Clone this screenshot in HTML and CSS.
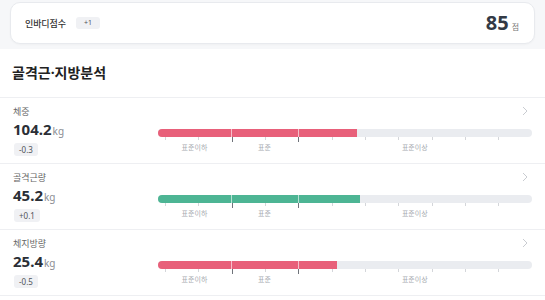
FILE: index.html
```html
<!DOCTYPE html>
<html lang="ko">
<head>
<meta charset="utf-8">
<link rel="stylesheet" href="styles.css">
</head>
<body>
<div class="top">
  <div class="score-card">
    <div class="score-left">
      <span class="score-label">인바디점수</span>
      <span class="chip chip-sm">+1</span>
    </div>
    <div class="score-right">
      <span class="score-num">85</span>
      <span class="score-unit">점</span>
    </div>
  </div>
</div>

<section class="analysis">
  <h2 class="title">골격근·지방분석</h2>

  <div class="row">
    <div class="info">
      <div class="label">체중</div>
      <div class="value">104.2<span class="unit">kg</span></div>
      <span class="chip">-0.3</span>
    </div>
    <div class="gauge">
      <div class="chev-row"><svg class="chev" width="6" height="10" viewBox="0 0 6 10"><path d="M1 1 L5 5 L1 9" fill="none" stroke="#c9ccd1" stroke-width="1"/></svg></div>
      <div class="track"><div class="fill red" style="width:53.3%"></div></div>
      <div class="ticks"><i></i><i></i><i class="dark"></i><i></i><i class="dark"></i><i></i><i></i><i></i><i></i><i></i><i></i></div>
      <div class="zones"><span>표준이하</span><span>표준</span><span>표준이상</span></div>
    </div>
  </div>

  <div class="row">
    <div class="info">
      <div class="label">골격근량</div>
      <div class="value">45.2<span class="unit">kg</span></div>
      <span class="chip">+0.1</span>
    </div>
    <div class="gauge">
      <div class="chev-row"><svg class="chev" width="6" height="10" viewBox="0 0 6 10"><path d="M1 1 L5 5 L1 9" fill="none" stroke="#c9ccd1" stroke-width="1"/></svg></div>
      <div class="track"><div class="fill green" style="width:54%"></div></div>
      <div class="ticks"><i></i><i></i><i class="dark"></i><i></i><i class="dark"></i><i></i><i></i><i></i><i></i><i></i><i></i></div>
      <div class="zones"><span>표준이하</span><span>표준</span><span>표준이상</span></div>
    </div>
  </div>

  <div class="row">
    <div class="info">
      <div class="label">체지방량</div>
      <div class="value">25.4<span class="unit">kg</span></div>
      <span class="chip">-0.5</span>
    </div>
    <div class="gauge">
      <div class="chev-row"><svg class="chev" width="6" height="10" viewBox="0 0 6 10"><path d="M1 1 L5 5 L1 9" fill="none" stroke="#c9ccd1" stroke-width="1"/></svg></div>
      <div class="track"><div class="fill red" style="width:47.8%"></div></div>
      <div class="ticks"><i></i><i></i><i class="dark"></i><i></i><i class="dark"></i><i></i><i></i><i></i><i></i><i></i><i></i></div>
      <div class="zones"><span>표준이하</span><span>표준</span><span>표준이상</span></div>
    </div>
  </div>
  <div class="end"></div>
</section>
</body>
</html>
```

FILE: styles.css
```css
* { box-sizing: border-box; }
html, body { margin: 0; padding: 0; }
body {
  width: 545px;
  height: 300px;
  overflow: hidden;
  background: #fff;
  font-family: "Noto Sans", "Noto Sans CJK KR", sans-serif;
  color: #222;
}

.top {
  background: #f6f7f9;
  padding: 2px 10px 5px;
}
.score-card {
  height: 42px;
  background: #fff;
  border: 1px solid #e8eaee;
  border-radius: 10px;
  box-shadow: 0 1px 2px rgba(0,0,0,0.03);
  display: flex;
  align-items: center;
  justify-content: space-between;
  padding: 0 15px 0 14px;
}
.score-left { display: flex; align-items: center; gap: 10px; }
.score-label { font-size: 9px; font-weight: 500; color: #333; letter-spacing: -0.1px; }
.score-right { display: flex; align-items: baseline; gap: 3px; }
.score-num { font-size: 20px; font-weight: 700; color: #333a45; line-height: 1; }
.score-unit { font-size: 8px; color: #777; }

.chip {
  display: inline-block;
  align-self: flex-start;
  background: #f0f1f4;
  color: #50545a;
  font-size: 8px;
  line-height: 13px;
  height: 13px;
  padding: 0 5px;
  border-radius: 3px;
}
.chip-sm { font-size: 7px; height: 12px; line-height: 12px; padding: 0 8px; align-self: center; }

.analysis { display: flex; flex-direction: column; }
.title {
  margin: 0;
  height: 48px;
  line-height: 48px;
  padding-left: 12px;
  font-size: 14px;
  font-weight: 700;
  color: #222;
}
.row {
  height: 66px;
  border-top: 1px solid #eeeff2;
  display: grid;
  grid-template-columns: 145px 1fr;
  padding: 0 14px 0 13px;
}
.end { border-top: 1px solid #eeeff2; }

.info { display: flex; flex-direction: column; padding-top: 6px; }
.label { font-size: 9px; line-height: 16px; color: #666; }
.value { font-size: 15px; font-weight: 700; line-height: 19px; color: #2b2f36; }
.unit { font-size: 10px; font-weight: 400; color: #8a8d93; margin-left: 1px; }
.info .chip { margin-top: 2px; margin-left: 1px; }

.gauge { display: flex; flex-direction: column; }
.chev-row { display: flex; justify-content: flex-end; padding: 8px 4px 0 0; height: 31px; }
.track {
  height: 8px;
  border-radius: 4px;
  background: #eaecf0;
  overflow: hidden;
}
.fill {
  height: 100%;
  background-image: linear-gradient(90deg,
    transparent 73px, rgba(255,255,255,0.6) 73px, rgba(255,255,255,0.6) 74px,
    transparent 74px, transparent 140px, rgba(255,255,255,0.6) 140px, rgba(255,255,255,0.6) 141px,
    transparent 141px);
}
.red { background-color: #e8607a; }
.green { background-color: #4db594; }

.ticks { display: flex; align-items: flex-start; padding-left: 7px; height: 6px; }
.ticks i { display: block; width: 33.33px; height: 3px; border-left: 1px solid #d4d6da; flex: none; }
.ticks i.dark { height: 5px; border-left-color: #6f737a; }

.zones {
  display: grid;
  grid-template-columns: 73px 67px 1fr;
  font-size: 7px;
  line-height: 9px;
  color: #a9acb2;
  text-align: center;
}
```
